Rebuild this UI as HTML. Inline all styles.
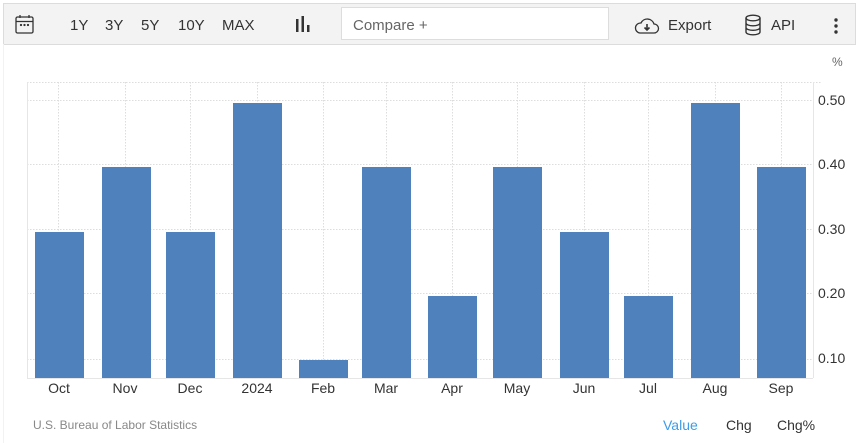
<!DOCTYPE html>
<html><head><meta charset="utf-8"><style>
body{margin:0;width:857px;height:443px;background:#fff;font-family:"Liberation Sans",sans-serif;position:relative;overflow:hidden}
.tb{position:absolute;left:3px;top:3px;width:851px;height:40px;background:#f3f3f3;border:1px solid #dcdcdc}
.t{position:absolute;font-size:15px;color:#333;top:17px}
.cmp{position:absolute;left:341px;top:7px;width:268px;height:33px;background:#fff;border:1px solid #ddd;box-sizing:border-box}
.lx{position:absolute;font-size:14px;color:#333;top:380px;width:60px;text-align:center}
.ly{position:absolute;left:818px;font-size:14px;color:#333}
</style></head><body>
<div class="tb"></div>
<div style="position:absolute;left:3px;top:44px;width:1px;height:399px;background:#f2f2f2"></div>
<svg style="position:absolute;left:14px;top:14px" width="22" height="22" viewBox="0 0 22 22" fill="none" stroke="#333" stroke-width="1.3"><rect x="2" y="3" width="17" height="16" rx="1.5"/><line x1="2" y1="7.5" x2="19" y2="7.5"/><line x1="6" y1="1" x2="6" y2="4"/><line x1="15" y1="1" x2="15" y2="4"/><circle cx="7" cy="11" r=".5" fill="#333"/><circle cx="10.5" cy="11" r=".5" fill="#333"/><circle cx="14" cy="11" r=".5" fill="#333"/></svg>
<div class="t" style="left:70px">1Y</div><div class="t" style="left:105px">3Y</div><div class="t" style="left:141px">5Y</div><div class="t" style="left:178px">10Y</div><div class="t" style="left:222px">MAX</div>
<svg style="position:absolute;left:295px;top:16px" width="16" height="16"><rect x="1" y="3" width="2.5" height="13" fill="#333"/><rect x="6.5" y="0" width="2.5" height="16" fill="#333"/><rect x="12" y="9" width="2.5" height="7" fill="#333"/></svg>
<div class="cmp"><span style="position:absolute;left:11px;top:9px;font-size:15px;color:#666">Compare +</span></div>
<svg style="position:absolute;left:634px;top:16px" width="26" height="20" viewBox="0 0 26 20" fill="none" stroke="#333" stroke-width="1.3"><path d="M6 17H20a4.5 4.5 0 0 0 0-9 7 7 0 0 0-13-1A5 5 0 0 0 6 17z"/><path d="M13 8v6M10.5 11.5 13 14l2.5-2.5" stroke-width="1.6"/></svg>
<div class="t" style="left:668px">Export</div>
<svg style="position:absolute;left:744px;top:14px" width="18" height="22" viewBox="0 0 18 22" fill="none" stroke="#333" stroke-width="1.4"><ellipse cx="9" cy="4" rx="7" ry="2.8"/><path d="M2 4v14c0 1.6 3.1 2.8 7 2.8s7-1.2 7-2.8V4M2 9c0 1.6 3.1 2.8 7 2.8s7-1.2 7-2.8M2 13.5c0 1.6 3.1 2.8 7 2.8s7-1.2 7-2.8"/></svg>
<div class="t" style="left:771px">API</div>
<svg style="position:absolute;left:833px;top:18px" width="6" height="16"><circle cx="3" cy="2" r="1.7" fill="#333"/><circle cx="3" cy="8" r="1.7" fill="#333"/><circle cx="3" cy="14" r="1.7" fill="#333"/></svg>
<div style="position:absolute;left:832px;top:55px;font-size:12px;color:#666">%</div>
<svg style="position:absolute;left:0;top:0" width="857" height="443">
<g stroke="#ddd" stroke-dasharray="1.5,1.5" stroke-width="1">
<line x1="27" y1="82.5" x2="822" y2="82.5"/><line x1="27" y1="100.5" x2="813" y2="100.5"/><line x1="27" y1="164.5" x2="813" y2="164.5"/><line x1="27" y1="229.5" x2="813" y2="229.5"/><line x1="27" y1="293.5" x2="813" y2="293.5"/><line x1="27" y1="359.5" x2="813" y2="359.5"/>
<line x1="58.5" y1="82" x2="58.5" y2="378"/><line x1="125.5" y1="82" x2="125.5" y2="378"/><line x1="190.5" y1="82" x2="190.5" y2="378"/><line x1="257.5" y1="82" x2="257.5" y2="378"/><line x1="323.5" y1="82" x2="323.5" y2="378"/><line x1="386.5" y1="82" x2="386.5" y2="378"/><line x1="452.5" y1="82" x2="452.5" y2="378"/><line x1="517.5" y1="82" x2="517.5" y2="378"/><line x1="584.5" y1="82" x2="584.5" y2="378"/><line x1="648.5" y1="82" x2="648.5" y2="378"/><line x1="715.5" y1="82" x2="715.5" y2="378"/><line x1="781.5" y1="82" x2="781.5" y2="378"/>
</g>
<line x1="27.5" y1="82" x2="27.5" y2="378" stroke="#e6e6e6"/>
<line x1="813.5" y1="82" x2="813.5" y2="378" stroke="#e6e6e6"/>
<line x1="27" y1="378.5" x2="813" y2="378.5" stroke="#e6e6e6"/>
<g fill="#4f81bd">
<rect x="35" y="232" width="49" height="146"/><rect x="102" y="167" width="49" height="211"/><rect x="166" y="232" width="49" height="146"/><rect x="233" y="103" width="49" height="275"/><rect x="299" y="360" width="49" height="18"/><rect x="362" y="167" width="49" height="211"/><rect x="428" y="296" width="49" height="82"/><rect x="493" y="167" width="49" height="211"/><rect x="560" y="232" width="49" height="146"/><rect x="624" y="296" width="49" height="82"/><rect x="691" y="103" width="49" height="275"/><rect x="757" y="167" width="49" height="211"/>
</g></svg>
<div class="ly" style="top:92px">0.50</div><div class="ly" style="top:156px">0.40</div><div class="ly" style="top:221px">0.30</div><div class="ly" style="top:285px">0.20</div><div class="ly" style="top:350px">0.10</div>
<div class="lx" style="left:29px">Oct</div><div class="lx" style="left:95px">Nov</div><div class="lx" style="left:160px">Dec</div><div class="lx" style="left:227px">2024</div><div class="lx" style="left:293px">Feb</div><div class="lx" style="left:356px">Mar</div><div class="lx" style="left:422px">Apr</div><div class="lx" style="left:487px">May</div><div class="lx" style="left:554px">Jun</div><div class="lx" style="left:618px">Jul</div><div class="lx" style="left:685px">Aug</div><div class="lx" style="left:751px">Sep</div>
<div style="position:absolute;left:33px;top:418px;font-size:12px;color:#888">U.S. Bureau of Labor Statistics</div>
<div style="position:absolute;left:663px;top:417px;font-size:14px;color:#3d9be9">Value</div>
<div style="position:absolute;left:726px;top:417px;font-size:14px;color:#333">Chg</div>
<div style="position:absolute;left:777px;top:417px;font-size:14px;color:#333">Chg%</div>
</body></html>
